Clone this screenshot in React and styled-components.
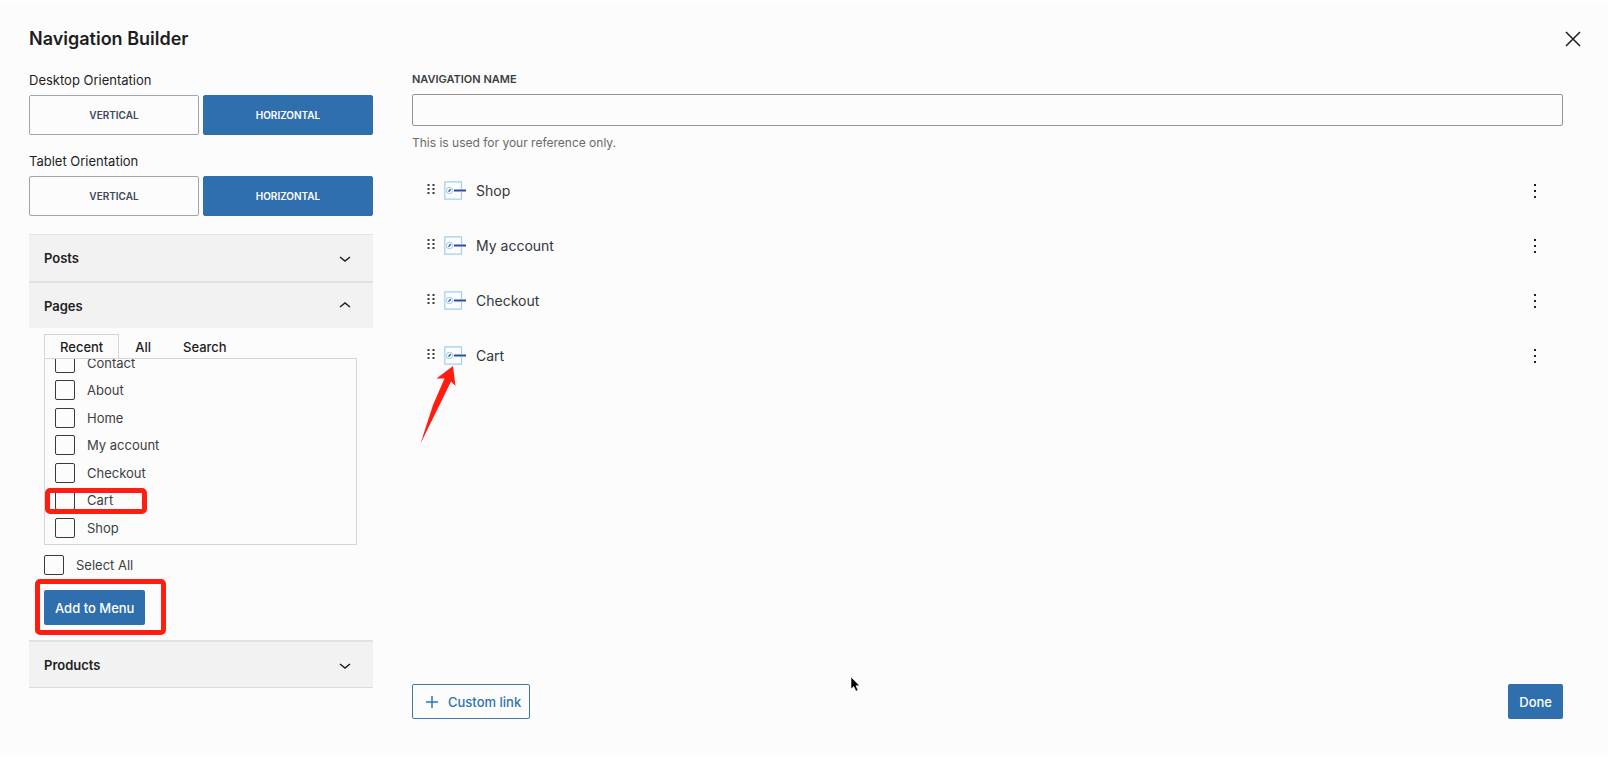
import React, { useLayoutEffect, useRef, useState } from "react";
import styled, { createGlobalStyle, css } from "styled-components";

const GlobalStyle = createGlobalStyle`
  * {
    box-sizing: border-box;
  }

  body {
    margin: 0;
    background: #fff;
    color: #1e1e1e;
    font-family: Inter, "Liberation Sans", sans-serif;
    font-size: 13px;
  }

  button,
  input {
    font-family: inherit;
  }
`;

const Modal = styled.div`
  position: relative;
  display: flex;
  flex-direction: column;
  min-height: calc(100vh - 5px);
  margin: 1px 7px 4px 0;
  background: #fcfcfc;
`;

const Header = styled.header`
  display: flex;
  align-items: center;
  justify-content: space-between;
  padding: 26px 27px 0 29px;
`;

const Title = styled.h1`
  margin: 0;
  font-size: 18px;
  font-weight: 600;
  line-height: 24px;
`;

const IconButton = styled.button`
  display: flex;
  padding: 0;
  border: none;
  background: none;
  color: #1e1e1e;
  cursor: pointer;
`;

const Body = styled.div`
  flex-grow: 1;
  display: grid;
  grid-template-columns: 344px 1fr;
  gap: 39px;
  padding: 19px 45px 36px 29px;
`;

const Group = styled.div`
  margin-bottom: 16px;
`;

const GroupLabel = styled.div`
  margin-bottom: 5px;
  line-height: 20px;
`;

const ToggleRow = styled.div`
  display: grid;
  grid-template-columns: 1fr 1fr;
  gap: 4px;
`;

const ToggleButton = styled.button`
  height: 40px;
  padding: 0;
  border: 1px solid ${(props) => (props.$active ? "#2f6fae" : "#9ea6ae")};
  border-radius: 2px;
  background: ${(props) => (props.$active ? "#2f6fae" : "#fcfcfc")};
  color: ${(props) => (props.$active ? "#fff" : "#3c4858")};
  font-size: 10px;
  font-weight: 600;
  text-transform: uppercase;
  cursor: pointer;
`;

const Accordion = styled.div`
  margin-top: 18px;
  border-bottom: 1px solid #dcdcdc;
`;

const SectionHeader = styled.button`
  display: flex;
  align-items: center;
  justify-content: space-between;
  width: 100%;
  height: 47px;
  padding: 0 20px 0 15px;
  border: none;
  border-top: ${(props) => (props.$first ? "1px" : "2px")} solid #e2e2e2;
  background: #f2f2f2;
  color: #1e1e1e;
  font-size: 13px;
  font-weight: 600;
  cursor: pointer;
`;

const SectionBody = styled.div`
  padding: 6px 16px 15px 15px;
`;

const Tabs = styled.div`
  display: flex;
  height: 24px;
`;

const Tab = styled.button`
  padding: 0 15px;
  border: 1px solid transparent;
  border-bottom: none;
  background: none;
  color: #1e1e1e;
  font-size: 13px;
  font-weight: 500;
  cursor: pointer;

  ${(props) =>
    props.$active &&
    css`
      border-color: #d6d6d6;
    `}
`;

const PageList = styled.ul`
  display: grid;
  grid-auto-rows: 27px 28px;
  height: 187px;
  margin: 0;
  padding: 0 10px 3px;
  border: 1px solid #d6d6d6;
  overflow-y: auto;
  scrollbar-width: none;
  list-style: none;
`;

const PageRow = styled.li`
  position: relative;
  display: flex;
  align-items: center;
`;

const CheckLabel = styled.label`
  display: flex;
  align-items: center;
  gap: 12px;
  color: #3c4043;
  line-height: 20px;
`;

const Checkbox = styled.input`
  appearance: none;
  width: 20px;
  height: 20px;
  margin: 0;
  border: 1px solid #3a3a3a;
  border-radius: 2px;
  background: #fcfcfc;

  &:checked {
    background: #2f6fae;
  }
`;

const SelectAll = styled.div`
  margin: 10px 0 15px;
`;

const AddWrapper = styled.div`
  position: relative;
  display: inline-flex;
`;

const PrimaryButton = styled.button`
  height: 35px;
  padding: 0 11px;
  border: none;
  border-radius: 2px;
  background: #2f6fae;
  color: #fff;
  font-size: 13px;
  font-weight: 500;
  cursor: pointer;
`;

const SecondaryButton = styled.button`
  display: flex;
  align-items: center;
  gap: 9px;
  height: 35px;
  padding: 0 8px 0 12px;
  border: 1px solid #3a78ad;
  border-radius: 2px;
  background: none;
  color: #2b74ae;
  font-size: 13px;
  font-weight: 500;
  cursor: pointer;
`;

const Highlight = styled.span`
  position: absolute;
  border: 5px solid #ff1d12;
  border-radius: 5px;
  pointer-events: none;
`;

const RowHighlight = styled(Highlight)`
  top: 2px;
  left: -10px;
  width: 102px;
  height: 26px;
`;

const ButtonHighlight = styled(Highlight)`
  top: -11px;
  left: -9px;
  width: 131px;
  height: 56px;
`;

const Main = styled.main`
  display: flex;
  flex-direction: column;
`;

const FieldLabel = styled.label`
  margin-top: 1px;
  color: #3a3f44;
  font-size: 11px;
  font-weight: 600;
  line-height: 16px;
  text-transform: uppercase;
`;

const TextInput = styled.input`
  height: 32px;
  margin: 7px 0;
  padding: 0 8px;
  border: 1px solid #949494;
  border-radius: 2px;
  background: #fcfcfc;
  font-size: 13px;
`;

const Help = styled.p`
  margin: 0 0 10px;
  color: #6a6a6a;
  font-size: 12px;
  line-height: 20px;
`;

const MenuList = styled.ul`
  margin: 0;
  padding: 0;
  list-style: none;
`;

const MenuItem = styled.li`
  position: relative;
  display: flex;
  align-items: center;
  height: 55px;
  padding: 0 20px 0 15px;
`;

const ItemName = styled.span`
  flex-grow: 1;
  margin-left: 9px;
  color: #32373c;
  font-size: 14px;
`;

const Grip = styled.svg`
  margin: 0 9px 4px 0;
`;

const Arrow = styled.svg`
  position: absolute;
  top: 38px;
  left: 8px;
`;

const Pointer = styled.svg`
  position: absolute;
  top: 675px;
  left: 850px;
  pointer-events: none;
`;

const Footer = styled.footer`
  display: flex;
  justify-content: space-between;
  margin-top: auto;
`;

const Chevron = ({ up }) => (
  <svg width="16" height="16" viewBox="0 0 16 16" fill="none" stroke="#1e1e1e" strokeWidth="1.5">
    <path d={up ? "M3 9 L8 5 L13 9" : "M3 7 L8 11 L13 7"} />
  </svg>
);

const GripIcon = () => (
  <Grip width="8" height="12" viewBox="0 0 8 12" fill="#3a3a3a">
    {[0, 5].map((x) =>
      [1, 5, 9].map((y) => <rect key={`${x}-${y}`} x={x + 0.5} y={y} width="2" height="2" />)
    )}
  </Grip>
);

const LinkIcon = () => (
  <svg width="23" height="19" viewBox="0 0 23 19" fill="none">
    <path d="M17.5 8V0.8H0.8V18.2H17.5V11" stroke="#a3cfec" strokeWidth="1.2" />
    <circle cx="5.5" cy="9.5" r="3.2" stroke="#9ccbe9" />
    <path d="M4.5 10.6 L6.7 8.2" stroke="#22508f" strokeWidth="1.3" />
    <path d="M10 9.5H22" stroke="#2a4f9c" strokeWidth="2" />
  </svg>
);

const MoreIcon = () => (
  <svg width="16" height="16" viewBox="0 0 16 16" fill="#1e1e1e">
    <rect x="7" y="1" width="2" height="2" />
    <rect x="7" y="7" width="2" height="2" />
    <rect x="7" y="13" width="2" height="2" />
  </svg>
);

const OrientationToggle = ({ label }) => {
  const [value, setValue] = useState("Horizontal");

  return (
    <Group role="group" aria-label={label}>
      <GroupLabel>{label}</GroupLabel>
      <ToggleRow>
        {["Vertical", "Horizontal"].map((option) => (
          <ToggleButton
            key={option}
            $active={value === option}
            aria-pressed={value === option}
            onClick={() => setValue(option)}
          >
            {option}
          </ToggleButton>
        ))}
      </ToggleRow>
    </Group>
  );
};

const pages = ["Contact", "About", "Home", "My account", "Checkout", "Cart", "Shop"];
const menuItems = ["Shop", "My account", "Checkout", "Cart"];

const PagePicker = () => {
  const [tab, setTab] = useState("Recent");
  const [checked, setChecked] = useState([]);
  const listRef = useRef(null);

  // start at the end of the list
  useLayoutEffect(() => {
    listRef.current.scrollTop = listRef.current.scrollHeight;
  }, []);

  const toggle = (page) => {
    setChecked((prev) =>
      prev.includes(page) ? prev.filter((p) => p !== page) : [...prev, page]
    );
  };

  return (
    <SectionBody>
      <Tabs role="tablist">
        {["Recent", "All", "Search"].map((name) => (
          <Tab
            key={name}
            role="tab"
            aria-selected={tab === name}
            $active={tab === name}
            onClick={() => setTab(name)}
          >
            {name}
          </Tab>
        ))}
      </Tabs>

      <PageList ref={listRef}>
        {pages.map((page) => (
          <PageRow key={page}>
            <CheckLabel>
              <Checkbox
                type="checkbox"
                checked={checked.includes(page)}
                onChange={() => toggle(page)}
              />
              {page}
            </CheckLabel>
            {page === "Cart" && <RowHighlight />}
          </PageRow>
        ))}
      </PageList>

      <SelectAll>
        <CheckLabel>
          <Checkbox
            type="checkbox"
            checked={checked.length === pages.length}
            onChange={(e) => setChecked(e.target.checked ? pages : [])}
          />
          Select All
        </CheckLabel>
      </SelectAll>

      <AddWrapper>
        <PrimaryButton>Add to Menu</PrimaryButton>
        <ButtonHighlight />
      </AddWrapper>
    </SectionBody>
  );
};

const App = () => {
  const [name, setName] = useState("");

  return (
    <>
      <GlobalStyle />
      <Modal>
        <Header>
          <Title>Navigation Builder</Title>
          <IconButton aria-label="Close">
            <svg width="16" height="16" viewBox="0 0 16 16" stroke="#1e1e1e" strokeWidth="1.5">
              <path d="M1 1 L15 15 M15 1 L1 15" />
            </svg>
          </IconButton>
        </Header>

        <Body>
          <aside>
            <OrientationToggle label="Desktop Orientation" />
            <OrientationToggle label="Tablet Orientation" />

            <Accordion>
              <SectionHeader $first aria-expanded="false">
                Posts
                <Chevron />
              </SectionHeader>
              <SectionHeader aria-expanded="true">
                Pages
                <Chevron up />
              </SectionHeader>
              <PagePicker />
              <SectionHeader aria-expanded="false">
                Products
                <Chevron />
              </SectionHeader>
            </Accordion>
          </aside>

          <Main>
            <FieldLabel htmlFor="nav-name">Navigation name</FieldLabel>
            <TextInput
              id="nav-name"
              type="text"
              value={name}
              onChange={(e) => setName(e.target.value)}
            />
            <Help>This is used for your reference only.</Help>

            <MenuList>
              {menuItems.map((item) => (
                <MenuItem key={item}>
                  <GripIcon />
                  <LinkIcon />
                  <ItemName>{item}</ItemName>
                  <IconButton aria-label={`Options for ${item}`}>
                    <MoreIcon />
                  </IconButton>
                  {item === "Cart" && (
                    <Arrow width="37" height="78" viewBox="0 0 37 78" fill="#ff1d12">
                      <path d="M33 0 L35.5 20 L31 15.5 L23 32 L0.5 77.5 L13 39 L24.5 12.5 L16.5 12.5 Z" />
                    </Arrow>
                  )}
                </MenuItem>
              ))}
            </MenuList>

            <Footer>
              <SecondaryButton>
                <svg width="14" height="14" viewBox="0 0 14 14" stroke="#2b74ae" strokeWidth="1.5">
                  <path d="M1 7H13 M7 1V13" />
                </svg>
                Custom link
              </SecondaryButton>
              <PrimaryButton>Done</PrimaryButton>
            </Footer>
          </Main>
        </Body>

        <Pointer width="12" height="18" viewBox="0 0 12 18">
          <path
            d="M1 1 V13 L3.8 10.6 L6 15.2 L8 14.3 L6 9.8 H9.6 Z"
            fill="#000"
            stroke="#fff"
            strokeWidth="0.6"
          />
        </Pointer>
      </Modal>
    </>
  );
};

export default App;
